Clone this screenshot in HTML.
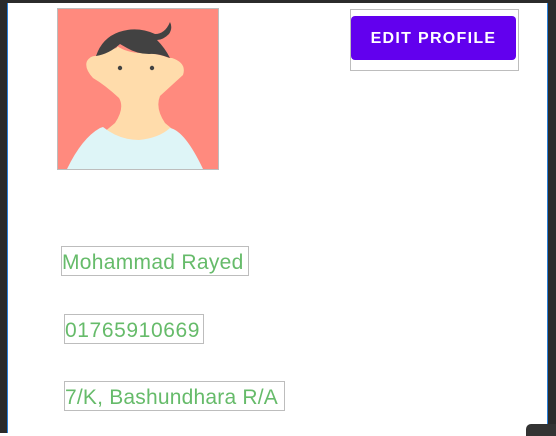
<!DOCTYPE html>
<html><head><style>
body{margin:0;width:556px;height:433px;background:#fff;position:relative;overflow:hidden;font-family:"Liberation Sans",sans-serif}
.d{position:absolute;background:#2b2b2b}
.t{position:absolute;border:1px solid #bdbdbd;color:#66bb6a;font-size:21px;line-height:32px;height:28px;padding:0;white-space:nowrap;overflow:hidden}
</style></head><body>
<div class="d" style="left:0;top:0;width:556px;height:3px"></div>
<div class="d" style="left:0;top:0;width:7px;height:433px"></div>
<div style="position:absolute;left:7px;top:3px;width:1px;height:430px;background:#2a7fd8"></div>
<div class="d" style="left:548px;top:0;width:8px;height:433px"></div>
<div style="position:absolute;left:547px;top:3px;width:1px;height:430px;background:#2a7fd8"></div>
<div class="d" style="left:526px;top:424px;width:30px;height:12px;border-radius:5px 0 0 0;background:#333"></div>

<svg style="position:absolute;left:57px;top:8px" width="162" height="162" viewBox="0 0 162 162">
<rect x="0.5" y="0.5" width="161" height="161" fill="#ff8a7e" stroke="#bdbdbd"/>
<path d="M40 48 Q40 40 48 40 Q62 42 60 38 Q70 45 85 45 Q100 45 112 50 L115 50 Q130 55 126 67 Q115 77 103 88 Q98 100 108 115 L120 125 Q100 135 82 135 Q62 135 46 125 L58 115 Q68 100 62 90 Q48 77 36 70 Q27 60 30 53 Q34 47 40 48Z" fill="#ffdcab"/>
<path d="M39 48 Q45 30 62 24 Q80 18 98 26 Q108 26 113 14 Q116 20 112 26 Q106 32 100 32 Q108 40 113 50 Q100 45 92 46 Q80 46 70 40 L63 36 Q52 46 39 48Z" fill="#424242"/>
<circle cx="63" cy="60" r="2.2" fill="#424242"/>
<circle cx="95" cy="60" r="2.2" fill="#424242"/>
<path d="M10 161 Q25 130 43 120 L46 119 Q62 132 82 132 Q102 130 113 120 Q128 123 146 161Z" fill="#def5f7"/>
</svg>

<div style="position:absolute;left:350px;top:9px;width:167px;height:60px;border:1px solid #bdbdbd"></div>
<div style="position:absolute;left:351px;top:16px;width:165px;height:44px;background:#6200ee;border-radius:4px;color:#fff;font-size:16px;font-weight:bold;letter-spacing:1.3px;text-align:center;line-height:45px">EDIT PROFILE</div>

<div class="t" style="left:61px;top:246px;width:186px;letter-spacing:0.3px">Mohammad Rayed</div>
<div class="t" style="left:64px;top:314px;width:138px;letter-spacing:0.6px">01765910669</div>
<div class="t" style="left:64px;top:381px;width:219px;letter-spacing:0.2px">7/K, Bashundhara R/A</div>
</body></html>
